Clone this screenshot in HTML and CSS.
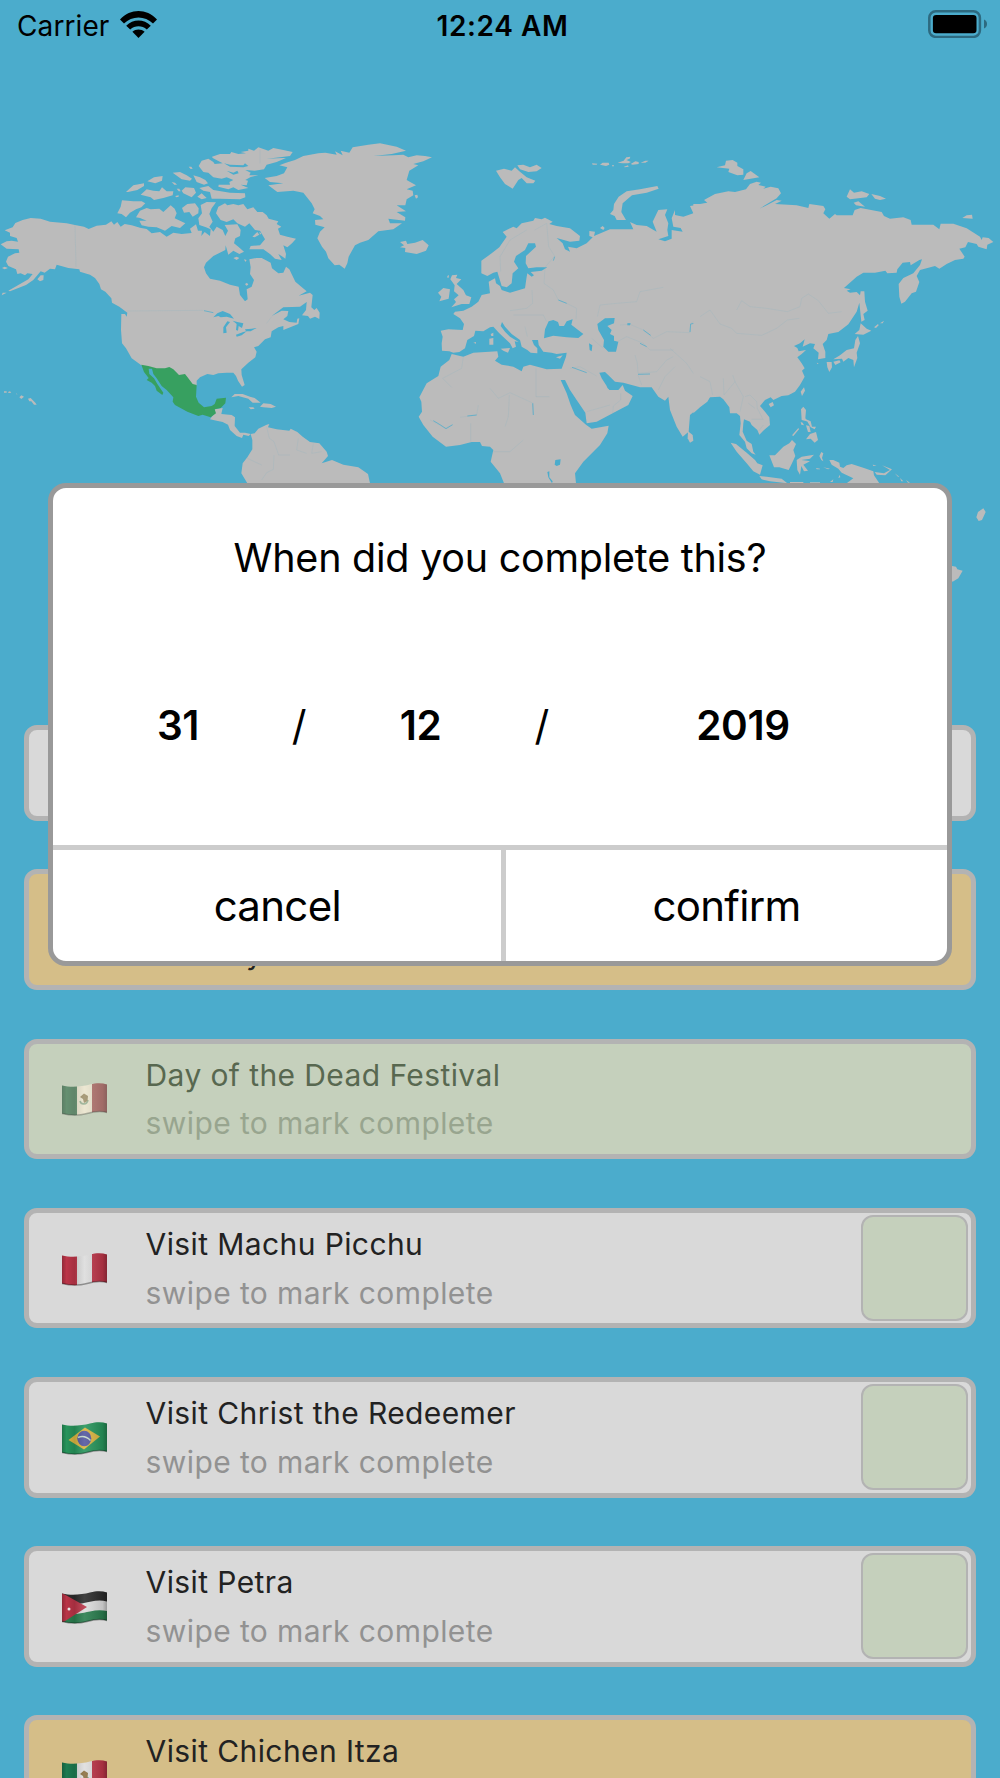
FILE: index.html
```
<!DOCTYPE html>
<html lang="en">
<head>
  <meta charset="UTF-8">
  <meta name="viewport" content="width=device-width, initial-scale=1.0">
  <title>Bucket List</title>
  <link rel="stylesheet" href="styles.css">
</head>
<body>

  <!-- flags -->
  <svg class="defs" width="0" height="0">
    <defs>
      <clipPath id="wave">
        <path d="M0 2.5 C10 5 20 3.5 28 1.5 C35 -.2 40 0 45 1.5 V29.5 C38 27.5 32 28.5 25 30.5 C16 33 8 32.5 0 30.5Z"/>
      </clipPath>
      <linearGradient id="shade">
        <stop offset="0" stop-color="#000" stop-opacity=".22"/>
        <stop offset=".1" stop-color="#000" stop-opacity="0"/>
        <stop offset=".28" stop-color="#000" stop-opacity=".12"/>
        <stop offset=".5" stop-color="#fff" stop-opacity=".1"/>
        <stop offset=".9" stop-color="#000" stop-opacity=".12"/>
        <stop offset="1" stop-color="#000" stop-opacity=".3"/>
      </linearGradient>
      <symbol id="cloth" viewBox="0 0 45 33">
        <rect width="45" height="33" fill="url(#shade)" clip-path="url(#wave)"/>
        <path d="M0 30.5 C8 32.5 16 33 25 30.5 C32 28.5 38 27.5 45 29.5" fill="none" stroke="#000" stroke-opacity=".35" stroke-width="1.4"/>
      </symbol>
      <symbol id="mexico" viewBox="0 0 45 33">
        <g clip-path="url(#wave)">
          <rect width="15" height="33" fill="#1d7a50"/>
          <rect x="15" width="15" height="33" fill="#dedede"/>
          <rect x="30" width="15" height="33" fill="#bb3548"/>
        </g>
        <path d="M18 18 C19 22 25 22 26 17" fill="none" stroke="#6aa48c" stroke-width="1.6"/>
        <path d="M18 14 L22 10.5 L26 13 L25.5 18 L22 20 L21 16Z" fill="#8b7041"/>
        <use href="#cloth"/>
      </symbol>
      <symbol id="peru" viewBox="0 0 45 33">
        <g clip-path="url(#wave)">
          <rect width="15" height="33" fill="#bb3548"/>
          <rect x="15" width="15" height="33" fill="#dcdcdc"/>
          <rect x="30" width="15" height="33" fill="#bb3548"/>
        </g>
        <use href="#cloth"/>
      </symbol>
      <symbol id="brazil" viewBox="0 0 45 33">
        <rect width="45" height="33" fill="#27945b" clip-path="url(#wave)"/>
        <path d="M6.500 18 L23 5.500 L38 14.500 L22 27.500Z" fill="#d9b440"/>
        <ellipse cx="22.300" cy="16.500" rx="7" ry="7.700" fill="#5358a0"/>
        <path d="M16 15.500 C20 13.800 25 15 28.500 18.500" fill="none" stroke="#c4dccc" stroke-width="1.400"/>
        <use href="#cloth"/>
      </symbol>
      <symbol id="jordan" viewBox="0 0 45 33">
        <g clip-path="url(#wave)">
          <rect width="45" height="33" fill="#dcdcdc"/>
          <path d="M0 0 H45 V10.500 C36 8 28 11 22 12 C14 14 8 13 0 11Z" fill="#2c2c2c"/>
          <path d="M0 24 C12 24 20 22 28 20.500 C34 19 40 19 45 20 V33 H0Z" fill="#2a7d4e"/>
          <path d="M0 2 L25 16 L0 32Z" fill="#b93447"/>
        </g>
        <circle cx="7" cy="18" r="1.500" fill="#eee"/>
        <use href="#cloth"/>
      </symbol>
    </defs>
  </svg>

  <header class="status-bar">
    <div class="carrier">
      <span class="carrier-name">Carrier</span>
      <svg class="wifi" viewBox="0 0 37 27">
        <path d="M0 8.500 C10.500 -2.800 26.500 -2.800 37 8.500 L33 12.600 C25 4.500 12 4.500 4 12.600Z"/>
        <path d="M6.200 14.700 C13 7.800 24 7.800 30.800 14.700 L26.800 18.600 C22 14.200 15 14.200 10.200 18.600Z"/>
        <path d="M12.400 20.800 C15.800 17.600 21.200 17.600 24.600 20.800 L18.500 27Z"/>
      </svg>
    </div>
    <span class="time">12:24 AM</span>
    <svg class="battery" viewBox="0 0 60 28">
      <rect x="1.300" y="1.300" width="50.600" height="25.600" rx="6.500" fill="none" stroke="#2d6a80" stroke-width="2.500"/>
      <rect x="4.900" y="4.900" width="43.600" height="18.300" rx="3.200"/>
      <path d="M56 9.500 C60 11 60 17 56 18.500Z" fill="#2d6a80"/>
    </svg>
  </header>

  <svg class="map" viewBox="0 0 3000 1410">
    <!-- north america -->
    <path d="M14 301 L38 292 L46 279 L68 270 L92 264 L122 266 L150 275 L200 280 L225 285 L252 290 L266 297 L290 287 L318 284 L334 274 L342 284 L352 276 L362 290 L374 282 L395 286 L420 293 L440 297 L455 310 L480 306 L500 320 L520 308 L545 312 L575 309 L570 296 L588 283 L594 302 L606 302 L604 318 L614 306 L630 318 L632 298 L618 292 L598 285 L595 265 L606 250 L602 225 L620 216 L648 217 L635 235 L628 252 L638 275 L628 290 L640 305 L650 290 L668 300 L676 318 L684 302 L674 285 L712 283 L722 300 L720 318 L706 325 L702 340 L715 350 L732 365 L718 372 L700 362 L685 374 L677 346 L676 360 L640 378 L618 398 L612 412 L618 430 L630 446 L660 452 L690 464 L716 470 L720 495 L735 514 L743 508 L740 478 L755 470 L762 450 L750 432 L752 412 L748 388 L770 384 L785 384 L812 398 L816 415 L835 430 L850 428 L858 410 L868 418 L886 455 L920 484 L896 497 L930 488 L938 495 L934 532 L943 540 L950 534 L959 548 L958 567 L945 560 L930 566 L924 558 L906 556 L918 540 L920 516 L900 530 L850 532 L815 558 L845 542 L865 543 L862 558 L850 568 L868 576 L890 578 L892 566 L898 565 L895 582 L865 594 L850 600 L850 588 L835 592 L815 604 L812 622 L795 628 L775 648 L762 652 L770 665 L766 682 L745 698 L724 718 L725 735 L734 765 L726 770 L714 752 L708 738 L700 728 L680 728 L655 730 L640 735 L622 732 L600 742 L590 752 L590 767 L576 764 L556 738 L536 738 L508 716 L470 718 L424 706 L395 685 L378 655 L366 640 L363 600 L364 552 L375 552 L380 560 L382 548 L358 530 L336 518 L334 505 L316 485 L303 478 L298 462 L285 444 L270 434 L240 425 L238 418 L205 414 L170 404 L165 418 L150 416 L134 428 L122 424 L100 450 L78 465 L30 484 L25 482 L55 465 L85 448 L98 432 L82 430 L75 436 L62 430 L52 432 L48 418 L25 408 L18 395 L24 380 L45 370 L58 368 L56 358 L20 356 L2 343 L20 334 L35 332 L54 335 L50 324 L30 318 L30 308Z"/>
    <path d="M5 496 L8 488 L20 488Z M6 414 L14 410 L24 414 L14 418Z M112 448 L122 436 L131 436 L130 450 L120 454Z"/>
    <path d="M12 784 h8 v4 h-8z M24 786 l6 -2 4 4 -8 1z M48 790 l4 2 -1 2z M58 802 l6 -6 8 4 -8 7z M84 806 l8 -2 14 14 4 6 -8 0 -8 -10 -6 0z"/>
    <!-- arctic islands -->
    <path d="M352 250 L362 230 L366 211 L400 214 L425 214 L436 220 L424 232 L408 238 L390 248 L378 262 L365 252Z"/>
    <path d="M408 262 L420 242 L440 234 L452 238 L478 236 L490 246 L512 226 L524 236 L530 250 L524 265 L556 280 L540 294 L515 288 L495 302 L470 292 L445 290 L425 286 L418 272 L440 272 L420 264Z"/>
    <path d="M378 186 L400 166 L432 160 L432 168 L412 180 L384 186Z M422 194 L440 178 L460 182 L478 184 L486 172 L500 184 L520 184 L518 196 L490 204 L462 210 L452 202Z M442 154 L462 142 L488 138 L486 152 L466 160Z M518 128 L540 126 L560 136 L576 146 L570 152 L545 148Z M545 182 L556 172 L582 174 L588 188 L575 202 L550 190Z M566 110 h8 l4 6 -6 1z M515 156 l10 2 6 6 -8 0z M530 176 l8 0 4 8 -6 0z M526 198 l10 -2 0 4 -8 2z"/>
    <path d="M546 234 L562 222 L585 220 L596 235 L595 250 L578 260 L568 246 L552 248Z M592 200 L605 190 L620 204 L605 208Z M598 174 L625 168 L640 180 L690 188 L735 190 L736 202 L720 208 L660 206 L635 206 L630 186 L610 182Z M580 136 L600 142 L616 150 L624 160 L612 164 L590 156Z"/>
    <path d="M596 108 L605 92 L625 86 L640 96 L644 102 L668 100 L638 84 L636 80 L660 72 L690 72 L694 66 L715 72 L738 70 L722 66 L745 62 L745 56 L762 62 L775 52 L805 62 L820 54 L850 60 L878 66 L870 78 L840 82 L800 86 L848 84 L858 84 L830 96 L800 104 L792 118 L764 122 L736 120 L752 128 L748 136 L775 136 L752 141 L736 150 L744 152 L740 166 L722 164 L745 174 L715 180 L700 172 L685 178 L655 170 L656 164 L690 164 L688 156 L700 150 L680 142 L665 146 L640 142 L625 128 L610 126Z"/>
    <path class="water" d="M672 100 L690 104 L730 106 L735 100 L745 108 L730 112 L690 110Z M680 122 L700 128 L712 122 L716 130 L700 134Z M642 158 l10 -2 -2 6z"/>
    <path d="M648 250 L655 230 L675 220 L682 226 L700 222 L715 226 L730 222 L742 238 L760 232 L772 246 L788 246 L800 256 L806 266 L835 274 L830 282 L844 290 L834 296 L840 314 L862 320 L888 326 L876 340 L862 352 L850 346 L858 372 L856 386 L848 380 L835 372 L845 390 L825 386 L810 372 L790 358 L748 358 L752 348 L780 346 L795 328 L780 302 L765 300 L748 280 L735 290 L712 280 L700 268 L680 276 L662 270Z M757 320 L772 306 L778 314 L764 322Z M778 306 l6 4 -4 4z M700 384 l10 -4 8 4 -8 6z M732 388 l8 2 -4 6z M735 462 l6 -4 4 6 -6 3z"/>
    <!-- central america, caribbean -->
    <path d="M630 868 L644 848 L644 838 L668 834 L664 852 L695 855 L705 862 L704 888 L720 908 L735 908 L752 912 L746 918 L730 914 L726 924 L710 918 L690 900 L684 884 L668 876 L650 872Z"/>
    <path d="M694 802 L704 792 L728 792 L750 800 L764 804 L782 818 L758 818 L745 806 L715 798Z M780 830 L790 820 L812 822 L828 830 L815 834 L790 832Z M746 832 l14 0 4 4 -12 2z"/>
    <path class="mexico" d="M424 704 L445 708 L470 715 L495 715 L508 711 L520 718 L537 735 L555 732 L565 745 L578 762 L590 765 L588 800 L596 818 L612 832 L635 828 L644 822 L650 806 L678 803 L676 820 L662 834 L644 838 L648 850 L632 862 L608 854 L595 858 L562 845 L525 825 L518 815 L520 802 L500 780 L485 768 L470 745 L460 732 L456 716 L446 716 L448 732 L462 745 L472 762 L490 788 L487 795 L470 782 L465 768 L455 758 L440 750 L446 744 L432 726Z"/>
    <path class="water" d="M640 562 L652 550 L668 543 L690 552 L702 566 L680 560 L662 562 L655 558Z M670 610 L670 592 L682 574 L690 576 L678 592 L680 608Z M698 572 L712 576 L730 580 L726 594 L716 588 L714 602 L708 600 L710 582Z M708 614 L730 606 L740 604 L725 616 L710 620Z M735 598 L755 596 L770 594 L752 604 L738 604Z"/>
    <!-- south america -->
    <path d="M742 1060 L724 1030 L728 1000 L742 982 L757 958 L757 930 L752 912 L764 910 L775 896 L800 884 L808 882 L804 892 L830 898 L868 902 L872 896 L892 906 L908 920 L930 936 L958 940 L980 965 L984 978 L965 1000 L996 990 L1030 1004 L1075 1012 L1104 1032 L1110 1060Z"/>
    <!-- greenland, iceland, svalbard -->
    <path d="M794 144 L830 138 L852 130 L862 112 L838 106 L858 98 L885 90 L910 78 L955 70 L976 68 L1010 74 L1005 64 L1028 76 L1022 62 L1048 68 L1058 52 L1105 44 L1140 40 L1190 50 L1218 62 L1175 72 L1120 78 L1180 76 L1210 74 L1225 82 L1250 76 L1275 78 L1296 82 L1270 94 L1240 102 L1255 106 L1228 122 L1220 150 L1248 166 L1220 178 L1238 182 L1240 196 L1220 208 L1216 226 L1190 226 L1218 244 L1190 246 L1216 262 L1215 272 L1165 266 L1170 280 L1206 280 L1180 298 L1135 304 L1105 330 L1080 338 L1065 346 L1046 380 L1042 400 L1034 416 L1018 404 L1004 406 L985 385 L978 365 L966 350 L952 325 L960 305 L974 292 L946 284 L945 270 L970 268 L960 258 L938 250 L944 238 L935 220 L910 188 L880 182 L832 186 L805 166 L850 160 L810 156Z M1244 196 l8 -2 2 8 -6 4z"/>
    <path d="M1200 336 L1218 332 L1222 342 L1245 338 L1268 330 L1286 346 L1278 362 L1250 372 L1215 366 L1216 354 L1200 352 L1212 346Z"/>
    <path d="M1488 122 L1512 116 L1535 122 L1545 112 L1558 124 L1580 142 L1606 152 L1600 160 L1580 160 L1565 144 L1555 150 L1538 176 L1515 162 L1500 142Z M1552 106 L1570 104 L1590 112 L1610 104 L1625 114 L1610 124 L1585 126 L1560 118Z"/>
    <path d="M1776 100 l16 1 -2 3 -12 0z M1800 104 l8 -6 18 0 2 6 -10 4z M1836 106 l6 0 0 3 -6 0z M1853 98 l18 -6 8 -10 12 -2 -2 6 -10 4 14 6 -8 4 -18 0z M1872 110 l12 -4 2 4 -12 2z M1892 102 l14 -8 10 2 0 6 -18 2z M1922 98 l14 -6 10 0 -10 6z"/>
    <path d="M1830 252 L1840 240 L1842 222 L1856 200 L1880 184 L1920 178 L1972 168 L1976 176 L1940 188 L1896 196 L1868 220 L1864 246 L1878 270 L1850 270 L1844 258Z M1800 294 l8 -6 6 6 -4 6z"/>
    <!-- britain, ireland, mediterranean islands -->
    <path d="M1351 448 L1356 436 L1372 434 L1368 444 L1384 448 L1370 462 L1390 480 L1398 496 L1414 502 L1408 522 L1385 522 L1354 532 L1368 516 L1362 508 L1376 496 L1362 484 L1364 466Z M1314 488 L1330 474 L1350 478 L1346 506 L1318 514 L1324 500Z M1342 438 l5 -3 -1 8 -4 0z"/>
    <path d="M1502 656 L1530 654 L1524 668 L1510 662Z M1468 626 L1480 624 L1480 644 L1468 644Z M1472 612 l8 -4 0 10 -6 0z M1420 638 l8 -2 0 5z M1668 682 L1688 676 L1680 686Z"/>

    <!-- europe, africa, west asia -->
    <g transform="translate(1230 0)">
      <path d="M900 800 L860 838 L840 855 L836 905 L818 920 L800 890 L780 840 L775 800 L765 812 L745 800 L725 772 L690 772 L665 765 L640 758 L615 755 L600 740 L585 726 L568 728 L575 745 L590 768 L598 780 L625 780 L638 765 L645 782 L668 798 L655 825 L608 850 L560 875 L530 880 L526 848 L500 810 L480 780 L465 750 L452 750 L470 790 L482 825 L495 855 L528 884 L545 896 L596 887 L592 910 L570 945 L520 995 L495 1030 L498 1060 L282 1060 L270 1030 L242 995 L250 960 L240 950 L216 948 L210 936 L185 936 L150 945 L108 950 L68 920 L40 885 L26 860 L36 845 L34 815 L28 802 L50 760 L85 738 L92 710 L118 690 L125 672 L160 680 L190 668 L262 664 L265 680 L255 692 L275 704 L310 710 L335 724 L340 710 L360 704 L410 718 L455 716 L468 680 L470 668 L440 672 L425 668 L400 665 L386 645 L384 630 L366 630 L372 645 L382 655 L382 670 L362 668 L352 660 L335 650 L330 630 L305 612 L285 590 L276 576 L272 588 L285 605 L300 620 L326 636 L314 634 L318 650 L308 655 L300 640 L268 610 L250 590 L240 592 L220 604 L196 602 L192 618 L172 630 L165 655 L148 666 L130 668 L118 664 L96 662 L95 640 L98 620 L92 602 L115 598 L158 600 L162 582 L150 565 L130 552 L135 545 L160 542 L185 530 L205 515 L215 495 L240 490 L236 455 L255 445 L258 460 L270 468 L275 480 L300 488 L345 475 L350 440 L352 430 L365 440 L372 436 L362 426 L395 422 L412 412 L380 412 L355 415 L347 400 L348 378 L378 350 L375 340 L355 340 L345 360 L318 378 L312 395 L325 415 L308 430 L305 460 L290 472 L275 468 L262 425 L250 428 L232 438 L214 430 L214 392 L245 370 L268 352 L290 320 L278 306 L310 290 L320 295 L335 280 L370 272 L375 264 L395 268 L405 263 L428 275 L418 282 L440 288 L480 295 L510 318 L508 332 L480 335 L440 324 L458 340 L465 358 L480 365 L474 350 L500 355 L530 340 L548 322 L538 318 L538 303 L555 305 L552 318 L600 298 L650 298 L670 298 L660 276 L680 285 L710 288 L740 305 L728 275 L745 240 L772 238 L765 255 L775 280 L772 300 L775 318 L745 328 L765 334 L785 326 L785 300 L818 305 L812 294 L790 290 L785 265 L795 240 L795 255 L820 260 L850 250 L840 228 L900 218Z"/>
      <path d="M834 904 L848 915 L850 932 L840 938 L833 925Z"/>
      <path class="water" d="M402 625 L405 598 L416 574 L430 570 L444 576 L448 588 L462 588 L470 574 L488 568 L484 584 L520 612 L505 624 L470 622 L430 617Z M562 582 L585 565 L614 564 L612 580 L592 588 L605 600 L600 612 L612 618 L612 632 L625 635 L618 665 L595 665 L580 650 L582 630 L565 600Z M434 1004 L436 990 L452 988 L450 1004 L440 1008Z M412 1026 L418 1024 L418 1042 L428 1054 L426 1060 L415 1042Z M652 580 l10 0 -2 6 -8 0z M537 640 l10 6 -2 18 -6 -4z M590 768 l6 -4 2 12 -4 0z"/>
      <path class="border" d="M374 300 L410 280 L416 350 L434 378 L405 412 L402 460 L430 480 L445 510 L470 520 L500 535 L498 568 M272 425 L270 380 L300 330 L350 300 M366 480 L368 520 L350 535 L300 542 M310 555 L400 555 L410 575 M345 590 L352 620 M630 585 L660 583 L700 600 L730 625 L770 605 L840 608 L842 580 L900 545 M562 560 L570 525 L620 520 L680 515 L690 485 L760 472 M620 636 L650 620 L700 640 L720 660 L790 660 M545 625 L580 655 M675 675 L682 700 L684 730 L740 725 L770 690 L790 680 M684 735 L695 765 M745 780 L765 740 L795 710 M780 655 L830 700 L850 730 L900 760 M480 715 L510 710 L560 738 M530 845 L600 825 M608 850 L610 828 L632 810 L632 790 M378 715 L378 800 L418 800 M370 855 L370 820 L300 788 L265 805 L240 775 M285 890 L295 860 L298 795 M160 680 L155 715 L98 745 L125 772 M205 825 L200 855 L150 862 M60 870 L80 880 L105 895 L125 885 M182 880 L182 935 M250 965 L300 965 L340 930"/>
      <path class="border strong" d="M700 600 L722 616 M684 733 L720 732 M486 712 L530 728 M70 872 L90 884 L108 896 L128 884 M172 858 L200 855 M368 820 L370 855 M840 606 L842 582 L862 578 M690 640 L710 650 M434 380 L430 392 M445 510 L470 520"/>
    </g>

    <!-- east asia -->
    <g transform="translate(2100 0)">
      <path d="M-20 222 L0 222 L22 218 L12 210 L45 192 L85 184 L105 186 L138 178 L150 162 L170 155 L183 158 L175 165 L197 170 L190 176 L212 170 L235 175 L243 190 L230 205 L178 236 L200 226 L230 210 L245 212 L225 222 L290 226 L325 234 L328 222 L370 228 L376 238 L370 250 L388 266 L405 252 L410 256 L458 256 L464 240 L482 234 L545 246 L552 258 L570 266 L610 262 L632 270 L635 284 L700 284 L718 298 L722 281 L760 281 L800 295 L840 320 L845 330 L848 322 L866 324 L880 336 L862 344 L860 358 L835 350 L830 342 L804 336 L796 352 L778 356 L794 380 L790 386 L765 390 L740 402 L718 416 L705 408 L660 420 L650 438 L658 456 L648 485 L635 490 L615 515 L604 521 L598 500 L596 462 L610 444 L640 430 L660 405 L666 388 L658 390 L632 406 L630 396 L608 398 L592 418 L590 428 L562 430 L556 422 L525 428 L490 428 L470 440 L432 474 L452 478 L440 482 L450 488 L470 486 L480 496 L482 484 L493 484 L495 515 L503 542 L490 552 L494 570 L484 575 L478 518 L470 545 L445 583 L415 606 L385 612 L380 630 L368 642 L376 665 L376 684 L354 688 L356 668 L340 655 L345 642 L330 640 L308 650 L314 628 L300 640 L282 648 L292 654 L296 664 L318 660 L305 672 L292 682 L305 700 L314 715 L306 722 L314 740 L300 765 L285 785 L265 796 L245 798 L220 810 L212 802 L195 810 L180 828 L195 845 L208 862 L210 885 L192 900 L178 914 L172 900 L155 885 L150 875 L132 868 L130 880 L128 905 L140 932 L155 942 L160 965 L167 974 L155 970 L140 955 L135 935 L118 915 L122 880 L120 858 L110 850 L90 850 L88 832 L70 808 L60 800 L30 802 L22 815 L0 832 L-20 850Z"/>
      <path d="M50 112 L75 106 L78 92 L98 90 L112 98 L112 108 L130 118 L130 134 L112 136 L85 126 L88 116Z M130 150 L140 130 L152 123 L178 142Z M440 200 L450 178 L462 188 L485 184 L508 192 L500 202 L450 208Z M514 192 L540 198 L558 206 L540 210 L525 206Z M461 218 L475 214 L495 230 L468 226Z M787 264 L800 256 L816 254 L818 266Z"/>
      <path d="M464 612 L478 600 L482 580 L500 596 L514 602 L490 614Z M474 618 L480 640 L470 668 L472 684 L462 712 L460 690 L445 684 L430 695 L426 686 L400 688 L420 676 L440 660 L462 655 L466 630Z M380 696 L395 696 L396 712 L388 726 L382 712Z M400 695 l18 -4 4 6 -16 8z M522 592 l12 -10 2 4 -8 8z M540 580 l12 -8 -4 8z M350 698 l6 2 -4 2z"/>
      <path d="M302 785 L312 772 L315 782 L306 798Z M206 822 L218 816 L222 826 L212 832Z M303 838 L310 830 L318 840 L316 865 L325 875 L305 870Z M318 868 l14 6 4 16 12 0 -4 8 -12 -6z M302 876 l6 2 4 8 -8 -2z M318 886 l10 2 4 18 -8 0z M318 928 L330 912 L348 906 L354 930 L344 938 L332 926Z M276 916 L295 894 L297 898 L280 918Z"/>
      <path d="M92 938 L108 942 L140 968 L165 990 L172 1000 L188 1006 L180 1034 L160 1024 L140 1000 L110 965Z M208 976 L225 976 L250 950 L268 940 L276 930 L288 942 L280 960 L286 978 L276 1000 L266 1020 L238 1012 L222 1012 L215 994Z M178 1038 L200 1040 L245 1046 L262 1060 L210 1054 L185 1048Z M270 1056 h40 v3 h-40z"/>
      <path d="M290 990 L305 980 L342 974 L330 986 L304 990 L322 992 L330 994 L310 1004 L324 1022 L312 1024 L304 1008 L300 1034 L292 1020Z M358 978 l6 -12 6 4 -4 14 4 10 -6 -4z M348 1014 l12 2 0 2 -10 0z M370 1012 l20 4 -6 2z M330 1057 l30 0 0 3 -30 0z M388 990 L400 990 L418 998 L420 1010 L430 1014 L440 1006 L455 1002 L492 1014 L520 1024 L522 1036 L538 1060 L440 1060 L460 1045 L425 1028 L415 1016 L395 1004Z M524 1026 L552 1030 L570 1020 L546 1006 L576 1018 L556 1036 L530 1034Z M518 1004 l12 2 -10 2z M584 1030 l14 10 -4 0z M600 1044 l10 10 -6 0z M618 1050 l12 8 -6 0z M390 1056 l10 -8 -2 8z M415 1044 l4 -10 2 8z"/>
      <path d="M829 1162 L834 1146 L850 1135 L857 1146 L846 1170 L836 1173Z M740 1305 L768 1310 L772 1318 L788 1322 L775 1345 L758 1355 L740 1340Z"/>
      <path class="border" d="M0 560 L30 540 L60 582 L95 595 L110 610 L185 616 L230 595 L262 570 L298 565 M110 540 L125 512 L150 530 L200 535 L262 545 L300 530 L305 505 L325 492 L355 512 L385 550 L425 545 M0 740 L30 755 L38 795 M70 745 L72 795 L105 755 L98 735 M105 755 L130 800 L120 845 M135 800 L150 795 L170 815 L172 835 L190 870 M145 820 L165 835 M155 868 L188 868 M175 905 L190 885"/>
    </g>

    <path class="border" d="M225 285 L228 410 M380 543 L610 541 M800 890 L808 925 L822 935 L836 975 L870 975 M742 985 L785 1005 M785 1050 L800 1028 L820 1018 L822 975 M895 925 L890 960 L920 970 M940 940 L935 970 L965 965 M780 58 V100 M815 560 L800 580"/>
    <path class="border strong" d="M612 542 L640 548"/>
  </svg>

  <main class="list">
    <div class="card card-search"></div>

    <div class="card gold">
      <div class="flag"></div>
      <div class="info">
        <p class="name">&nbsp;</p>
        <p class="date">January</p>
      </div>
    </div>

    <div class="card done">
      <svg class="flag"><use href="#mexico"/></svg>
      <div class="info">
        <p class="name">Day of the Dead Festival</p>
        <p class="hint">swipe to mark complete</p>
      </div>
    </div>

    <div class="card">
      <svg class="flag"><use href="#peru"/></svg>
      <div class="info">
        <p class="name">Visit Machu Picchu</p>
        <p class="hint">swipe to mark complete</p>
      </div>
      <div class="swipe"></div>
    </div>

    <div class="card">
      <svg class="flag"><use href="#brazil"/></svg>
      <div class="info">
        <p class="name">Visit Christ the Redeemer</p>
        <p class="hint">swipe to mark complete</p>
      </div>
      <div class="swipe"></div>
    </div>

    <div class="card">
      <svg class="flag"><use href="#jordan"/></svg>
      <div class="info">
        <p class="name">Visit Petra</p>
        <p class="hint">swipe to mark complete</p>
      </div>
      <div class="swipe"></div>
    </div>

    <div class="card gold">
      <svg class="flag"><use href="#mexico"/></svg>
      <div class="info">
        <p class="name">Visit Chichen Itza</p>
      </div>
    </div>
  </main>

  <div class="modal">
    <h1 class="question">When did you complete this?</h1>
    <div class="picker">
      <span class="value">31</span>
      <span class="slash">/</span>
      <span class="value">12</span>
      <span class="slash">/</span>
      <span class="value">2019</span>
    </div>
    <div class="actions">
      <button class="cancel">cancel</button>
      <button class="confirm">confirm</button>
    </div>
  </div>

</body>
</html>
```
FILE: styles.css
```
* {
  box-sizing: border-box;
}

body {
  margin: 0;
  height: 1778px;
  overflow: hidden;
  background: #4baccc;
  font-family: Inter, "Liberation Sans", sans-serif;
  color: #000;
}

.defs {
  position: absolute;
}

/* status bar */
.status-bar {
  display: grid;
  grid-template-columns: 1fr auto 1fr;
  align-items: center;
  height: 48px;
  padding: 0 12px 0 17px;
  font-size: 28px;
}

.carrier {
  display: flex;
  align-items: center;
  gap: 10.5px;
}

.carrier-name {
  padding-top: 3px;
  letter-spacing: .1px;
}

.wifi {
  width: 37px;
  height: 27px;
}

.time {
  padding-top: 3px;
  font-weight: 600;
  letter-spacing: .6px;
}

.battery {
  justify-self: end;
  width: 60px;
  height: 28px;
}

/* world map */
.map {
  display: block;
  width: 1000px;
  height: 470px;
  margin-top: 82px;
  fill: #bbb;
}

.map .mexico {
  fill: #37a060;
}

.map .water {
  fill: #4baccc;
}

.map .border {
  fill: none;
  stroke: #8fb4c0;
  stroke-width: 1.5;
  stroke-opacity: .5;
}

.map .strong {
  stroke: #4baccc;
  stroke-width: 2.2;
  stroke-opacity: 1;
}

/* list */
.list {
  display: flex;
  flex-direction: column;
  gap: 48.3px;
  margin-top: 124.6px;
  padding: 0 24.15px;
}

.card {
  display: flex;
  flex-shrink: 0;
  height: 120.8px;
  padding: 2.4px;
  border: 5px solid #b3b3b3;
  border-radius: 13px;
  background: #d9d9d9;
}

.card-search {
  height: 96.6px;
}

.gold {
  background: #d5be88;
}

.done {
  background: #c5d0bc;
}

.flag {
  width: 45px;
  height: 33px;
  margin: 37.5px 39px 0 30px;
}

.done .flag {
  opacity: .7;
  filter: sepia(.35);
}

.info {
  flex: 1;
  padding-top: 5px;
}

.info p {
  margin: 0;
  font-size: 30px;
  line-height: 48.5px;
  letter-spacing: .4px;
  white-space: nowrap;
}

.name,
.date {
  color: #222;
}

.info .date {
  line-height: 47px;
}

.hint {
  color: #929292;
}

.done .name {
  color: #586850;
}

.done .hint {
  color: #98a58f;
}

.swipe {
  width: 107px;
  border: 2.4px solid #b3b3b3;
  border-radius: 12px;
  background: #c5d0bc;
}

/* date dialog */
.modal {
  position: absolute;
  top: 483px;
  left: 48.3px;
  display: flex;
  flex-direction: column;
  width: 903.4px;
  height: 483px;
  border: 5px solid #999;
  border-radius: 18px;
  background: #fff;
}

.question {
  margin: 0;
  padding-top: 45px;
  font-size: 39.5px;
  font-weight: 400;
  line-height: 50px;
  letter-spacing: -.25px;
  text-align: center;
}

.picker {
  display: grid;
  grid-template-columns: repeat(4, 121.3px) 281px;
  flex: 1;
  align-items: center;
  padding: 22px 0 0 64px;
  font-size: 41px;
  text-align: center;
}

.value {
  font-size: 40.5px;
  font-weight: 600;
  letter-spacing: -.4px;
}

.actions {
  display: flex;
  height: 116px;
  border-top: 5px solid #ccc;
}

.actions button {
  padding: 0;
  border: 0;
  background: none;
  color: #000;
  font: inherit;
  font-size: 42px;
  letter-spacing: -.7px;
}

.actions .cancel {
  width: 453px;
  border-right: 5px solid #ccc;
}

.confirm {
  flex: 1;
}
```
